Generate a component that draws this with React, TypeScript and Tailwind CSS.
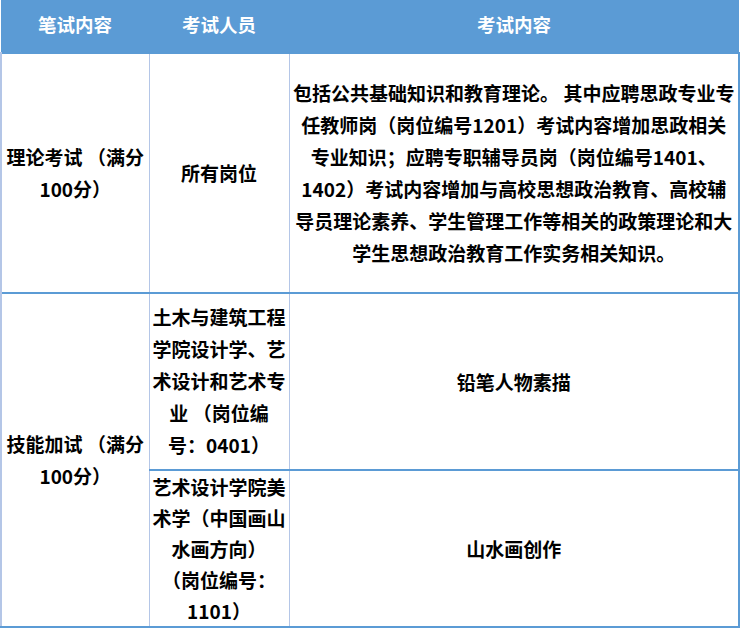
import React from 'react'

const lineBlue = 'border-[#5b9bd5]'

const Lines = ({ lines }: { lines: string[] }) => (
    <>
        {lines.map((l, i) => (
            <div key={i} className="whitespace-nowrap">
                {l}
            </div>
        ))}
    </>
)

const App = () => {
    const cell = `border-t-2 ${lineBlue} border-l border-l-[#b4c6e7] text-center align-middle p-0`
    return (
        <div
            className="w-[740px] h-[631px] bg-white text-black font-bold text-[19px] leading-[32px]"
            style={{ fontFamily: '"Noto Sans CJK SC", "Noto Sans", sans-serif' }}
        >
            <table className="w-[740px] table-fixed border-collapse">
                <colgroup>
                    <col className="w-[148px]" />
                    <col className="w-[140px]" />
                    <col />
                </colgroup>
                <thead>
                    <tr className="h-[53px] bg-[#5b9bd5] text-white text-[18.5px]">
                        <th className="font-bold p-0 pb-1">笔试内容</th>
                        <th className="font-bold p-0 pb-1">考试人员</th>
                        <th className="font-bold p-0 pb-1">考试内容</th>
                    </tr>
                </thead>
                <tbody>
                    <tr className="h-[240px]">
                        <td className={`${cell} border-l-2 border-l-[#5b9bd5]`}>
                            <Lines lines={['理论考试 （满分', '100分）']} />
                        </td>
                        <td className={cell}>所有岗位</td>
                        <td className={`${cell} border-r-2 border-r-[#5b9bd5]`}>
                            <Lines
                                lines={[
                                    '包括公共基础知识和教育理论。 其中应聘思政专业专',
                                    '任教师岗（岗位编号1201）考试内容增加思政相关',
                                    '专业知识；应聘专职辅导员岗（岗位编号1401、',
                                    '1402）考试内容增加与高校思想政治教育、高校辅',
                                    '导员理论素养、学生管理工作等相关的政策理论和大',
                                    '学生思想政治教育工作实务相关知识。',
                                ]}
                            />
                        </td>
                    </tr>
                    <tr className="h-[177px]">
                        <td rowSpan={2} className={`${cell} border-l-2 border-l-[#5b9bd5] border-b-2 border-b-[#5b9bd5]`}>
                            <Lines lines={['技能加试 （满分', '100分）']} />
                        </td>
                        <td className={`${cell} pb-0.5`}>
                            <Lines lines={['土木与建筑工程', '学院设计学、艺', '术设计和艺术专', '业 （岗位编', '号：0401）']} />
                        </td>
                        <td className={`${cell} border-r-2 border-r-[#5b9bd5]`}>铅笔人物素描</td>
                    </tr>
                    <tr className="h-[157px]">
                        <td className={`${cell} leading-[31px] border-b-2 border-b-[#5b9bd5]`}>
                            <Lines lines={['艺术设计学院美', '术学（中国画山', '水画方向）', '（岗位编号：', '1101）']} />
                        </td>
                        <td className={`${cell} border-r-2 border-r-[#5b9bd5] border-b-2 border-b-[#5b9bd5]`}>山水画创作</td>
                    </tr>
                </tbody>
            </table>
        </div>
    )
}

export default App
